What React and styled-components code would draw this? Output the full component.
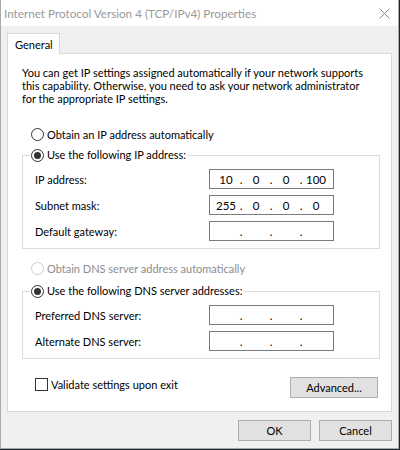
import React from "react";
import styled, { createGlobalStyle } from "styled-components";

const GlobalStyle = createGlobalStyle`
  html, body {
    margin: 0;
    padding: 0;
    background: #1e2430;
  }
  body {
    font-family: Lato, "Liberation Sans", Arial, sans-serif;
    font-size: 11px;
    color: #000;
  }
  * {
    box-sizing: border-box;
  }
`;

const Window = styled.div`
  width: 399px;
  height: 449px;
  border: 1px solid #aaaaaa;
  border-top: 0;
  background: #f0f0f0;
  display: flex;
  flex-direction: column;
`;

const TitleBar = styled.div`
  height: 26px;
  flex: none;
  background: #fff;
  display: flex;
  align-items: center;
  justify-content: space-between;
  padding: 0 8px 0 3px;
  color: #999999;
  font-size: 11.7px;
`;

const Body = styled.div`
  flex: 1;
  display: flex;
  flex-direction: column;
  padding: 7px 6px 0;
`;

const TabStrip = styled.div`
  display: flex;
`;

const Tab = styled.div`
  position: relative;
  z-index: 1;
  width: 53px;
  height: 21px;
  margin-bottom: -1px;
  padding-left: 7px;
  display: flex;
  align-items: center;
  background: #fff;
  border: 1px solid #d9d9d9;
  border-bottom: 0;
`;

const Panel = styled.div`
  height: 359px;
  background: #fff;
  border: 1px solid #d9d9d9;
  padding: 12px 11px 0 14px;
  display: flex;
  flex-direction: column;
`;

const Intro = styled.p`
  margin: 0;
  line-height: 13px;
`;

const Option = styled.div`
  display: flex;
  align-items: center;
  gap: 3px;
  height: 16px;
  margin: ${(p) => p.$top}px 0 0 9px;
  color: ${(p) => (p.$disabled ? "#8d8d8d" : "#000")};
`;

const Group = styled.fieldset`
  margin: ${(p) => p.$top}px 0 0;
  padding: 0;
  border: 1px solid #dcdcdc;
  min-width: 0;
`;

const Legend = styled.legend`
  margin-left: 7px;
  padding: 0 1px;
  line-height: 16px;
  height: 16px;
`;

const LegendInner = styled.span`
  display: flex;
  align-items: center;
  gap: 3px;
`;

const Fields = styled.div`
  display: flex;
  flex-direction: column;
  gap: 6px;
  padding: 6px 12px 7px;
`;

const FieldRow = styled.div`
  display: grid;
  grid-template-columns: 174px 125px;
  align-items: center;
`;

const IpBox = styled.div`
  height: 20px;
  border: 1px solid #7a7a7a;
  display: flex;
  align-items: center;
  padding: 0 5px 0 4px;
  background: #fff;
  font-size: 11.5px;
`;

const Octet = styled.span`
  width: 24px;
  text-align: center;
`;

const Dot = styled.span`
  width: 6px;
  text-align: center;
`;

const BottomRow = styled.div`
  display: flex;
  justify-content: space-between;
  align-items: flex-start;
  margin: 18px 2px 0 13px;
`;

const Check = styled.div`
  display: flex;
  align-items: center;
  gap: 3px;
  margin-top: 1px;
`;

const Box = styled.span`
  width: 13px;
  height: 13px;
  border: 1px solid #333;
  background: #fff;
`;

const Button = styled.button`
  width: ${(p) => p.$w}px;
  height: 21px;
  padding: 0;
  font: inherit;
  color: #000;
  background: #e1e1e1;
  border: 1px solid #adadad;
`;

const Footer = styled.div`
  display: flex;
  justify-content: flex-end;
  gap: 8px;
  margin-top: 8px;
`;

const Radio = ({ checked, disabled }) => (
  <svg width="13" height="13" viewBox="0 0 13 13">
    <circle
      cx="6.5"
      cy="6.5"
      r="6"
      fill="#fff"
      stroke={disabled ? "#cccccc" : "#333333"}
    />
    {checked && <circle cx="6.5" cy="6.5" r="3.5" fill="#333333" />}
  </svg>
);

const CloseIcon = () => (
  <svg width="11" height="11" viewBox="0 0 11 11">
    <path d="M0.5 0.5 L10.5 10.5 M10.5 0.5 L0.5 10.5" stroke="#8a8a8a" />
  </svg>
);

const IpField = ({ parts = ["", "", "", ""] }) => (
  <IpBox>
    {parts.map((p, i) => (
      <React.Fragment key={i}>
        {i > 0 && <Dot>.</Dot>}
        <Octet>{p}</Octet>
      </React.Fragment>
    ))}
  </IpBox>
);

export default function App() {
  return (
    <>
      <GlobalStyle />
      <Window>
        <TitleBar>
          <span>Internet Protocol Version 4 (TCP/IPv4) Properties</span>
          <CloseIcon />
        </TitleBar>
        <Body>
          <TabStrip>
            <Tab>General</Tab>
          </TabStrip>
          <Panel>
            <Intro>
              You can get IP settings assigned automatically if your network supports
              <br />
              this capability. Otherwise, you need to ask your network administrator
              <br />
              for the appropriate IP settings.
            </Intro>

            <Option $top={21}>
              <Radio />
              Obtain an IP address automatically
            </Option>
            <Group $top={5}>
              <Legend>
                <LegendInner>
                  <Radio checked />
                  Use the following IP address:
                </LegendInner>
              </Legend>
              <Fields>
                <FieldRow>
                  <span>IP address:</span>
                  <IpField parts={["10", "0", "0", "100"]} />
                </FieldRow>
                <FieldRow>
                  <span>Subnet mask:</span>
                  <IpField parts={["255", "0", "0", "0"]} />
                </FieldRow>
                <FieldRow>
                  <span>Default gateway:</span>
                  <IpField />
                </FieldRow>
              </Fields>
            </Group>

            <Option $top={11} $disabled>
              <Radio disabled />
              Obtain DNS server address automatically
            </Option>
            <Group $top={7}>
              <Legend>
                <LegendInner>
                  <Radio checked />
                  Use the following DNS server addresses:
                </LegendInner>
              </Legend>
              <Fields>
                <FieldRow>
                  <span>Preferred DNS server:</span>
                  <IpField />
                </FieldRow>
                <FieldRow>
                  <span>Alternate DNS server:</span>
                  <IpField />
                </FieldRow>
              </Fields>
            </Group>

            <BottomRow>
              <Check>
                <Box />
                Validate settings upon exit
              </Check>
              <Button $w={88}>Advanced...</Button>
            </BottomRow>
          </Panel>
          <Footer>
            <Button $w={73}>OK</Button>
            <Button $w={73}>Cancel</Button>
          </Footer>
        </Body>
      </Window>
    </>
  );
}
